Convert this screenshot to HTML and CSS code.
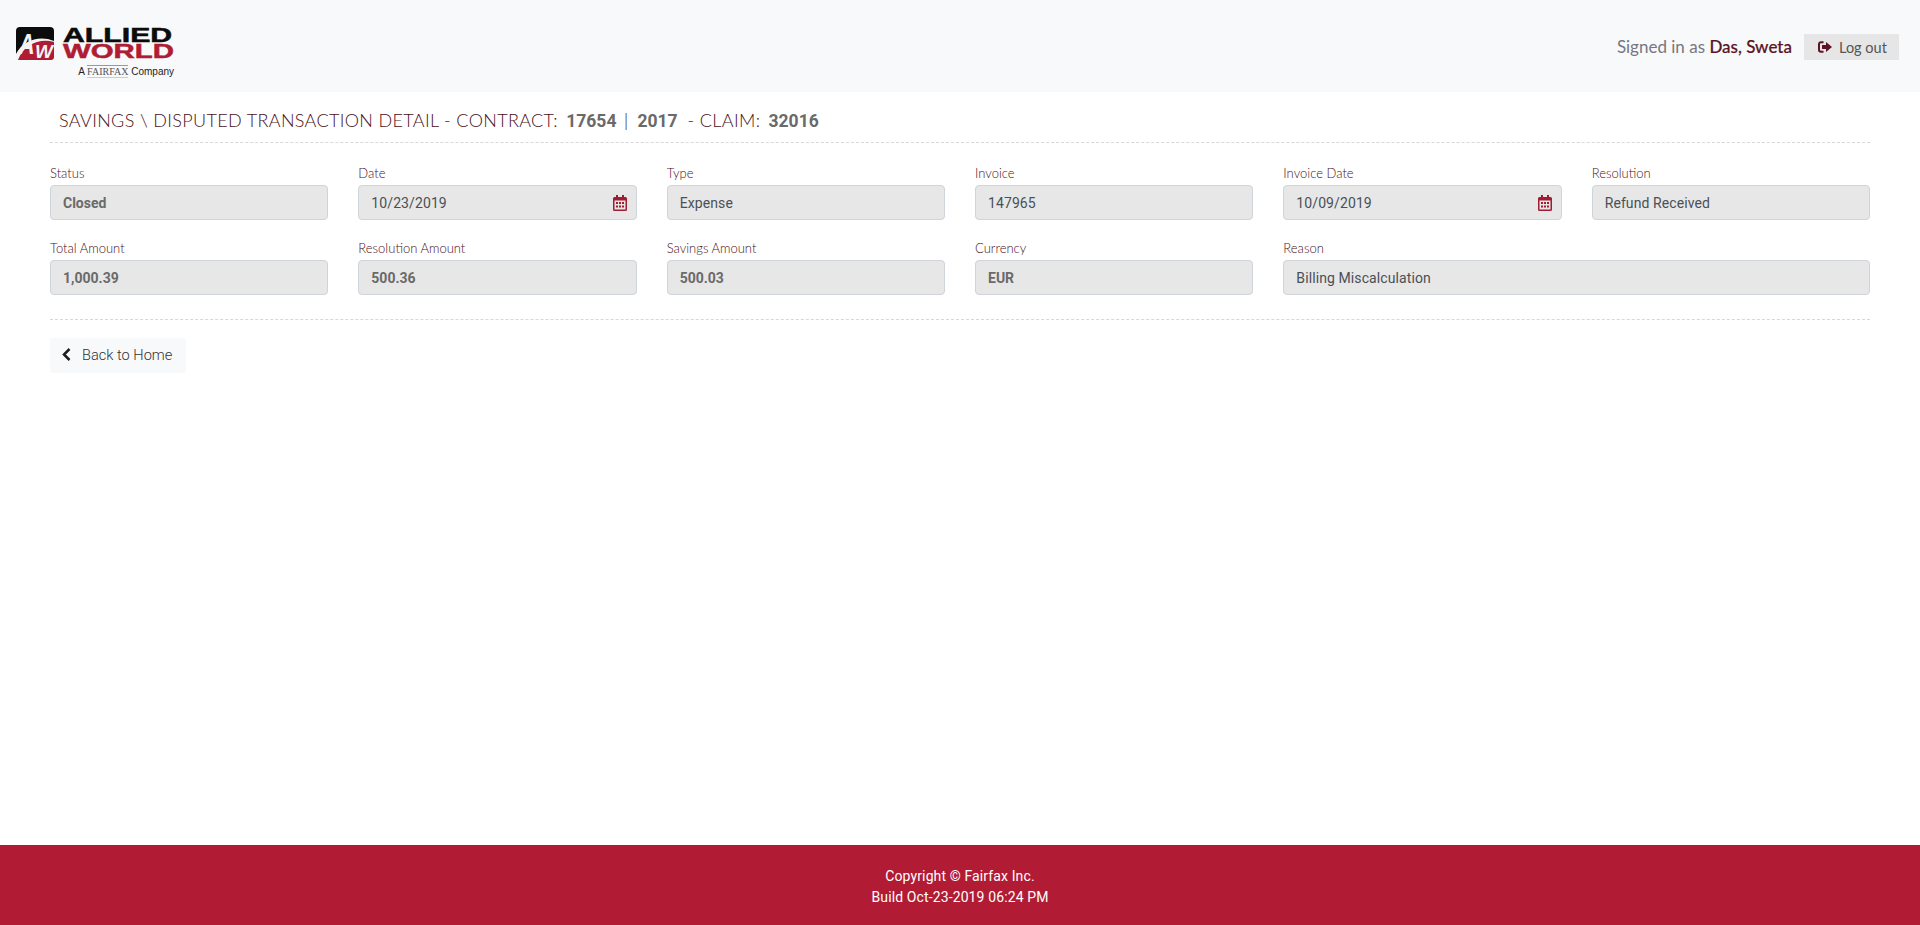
FILE: index.html

```html
<!doctype html>
<html dir="ltr" lang="en">
  <head>
    <meta charset="utf-8">
    <title>Disputed Transaction Detail</title>
    <link rel="stylesheet" href="styles.css">
  </head>
  <body>
    <header class="topbar">
      <div class="logo">
        <div class="logo-main">
          <svg class="logo-icon" width="38" height="36" viewBox="0 0 38 36">
            <rect x="0" y="0" width="38" height="33" rx="4" fill="#0c0c0c"/>
            <path d="M0 33V27C7 15 24 10 38 15V29a4 4 0 0 1-4 4Z" fill="#b01c33"/>
            <path d="M0 27C7 13 24 8 38 14V15C24 11 8 17 2 33H0Z" fill="#f4f4f4"/>
            <text class="logo-a" transform="translate(3 27) scale(.72 1)">A</text>
            <text class="logo-w" x="19" y="31">W</text>
          </svg>
          <div class="logo-words">
            <span class="logo-allied">ALLIED</span>
            <span class="logo-world">WORLD</span>
          </div>
        </div>
        <div class="logo-sub">A <span class="logo-fairfax">FAIRFAX</span> Company</div>
      </div>
      <div class="user">
        <span class="signed">Signed in as <b>Das, Sweta</b></span>
        <a class="logout" href="#">
          <svg width="14" height="12" viewBox="0 0 14 12">
            <path d="M5.5 1.2H3A2 2 0 0 0 1 3.200V8.800A2 2 0 0 0 3 10.800H5.500" fill="none" stroke="#5c1425" stroke-width="2"/>
            <path d="M8 1L14 6L8 11V8H4V4H8Z" fill="#5c1425"/>
          </svg>
          Log out
        </a>
      </div>
    </header>

    <main class="content">
      <h1 class="title">
        SAVINGS \ DISPUTED TRANSACTION DETAIL - CONTRACT: <b>17654</b><i class="sep"></i><b>2017</b><span class="claim">- CLAIM:</span> <b>32016</b>
      </h1>

      <div class="fields">
        <div class="field">
          <label>Status</label>
          <div class="box strong">Closed</div>
        </div>
        <div class="field">
          <label>Date</label>
          <div class="box">10/23/2019
            <svg class="cal" width="14" height="16" viewBox="0 0 14 16">
              <path d="M3 0h2v2h4V0h2v2h1.500A1.500 1.500 0 0 1 14 3.500v11a1.500 1.500 0 0 1-1.500 1.500h-11A1.500 1.500 0 0 1 0 14.500v-11A1.500 1.500 0 0 1 1.500 2H3Z" fill="#a01c33"/>
              <rect x="1.500" y="5.500" width="11" height="9" fill="#e6e6e6"/>
              <path d="M3 7h2v2H3Zm3 0h2v2H6Zm3 0h2v2H9ZM3 10.500h2v2H3Zm3 0h2v2H6Zm3 0h2v2H9Z" fill="#a01c33"/>
            </svg>
          </div>
        </div>
        <div class="field">
          <label>Type</label>
          <div class="box">Expense</div>
        </div>
        <div class="field">
          <label>Invoice</label>
          <div class="box">147965</div>
        </div>
        <div class="field">
          <label>Invoice Date</label>
          <div class="box">10/09/2019
            <svg class="cal" width="14" height="16" viewBox="0 0 14 16">
              <path d="M3 0h2v2h4V0h2v2h1.500A1.500 1.500 0 0 1 14 3.500v11a1.500 1.500 0 0 1-1.500 1.500h-11A1.500 1.500 0 0 1 0 14.500v-11A1.500 1.500 0 0 1 1.500 2H3Z" fill="#a01c33"/>
              <rect x="1.500" y="5.500" width="11" height="9" fill="#e6e6e6"/>
              <path d="M3 7h2v2H3Zm3 0h2v2H6Zm3 0h2v2H9ZM3 10.500h2v2H3Zm3 0h2v2H6Zm3 0h2v2H9Z" fill="#a01c33"/>
            </svg>
          </div>
        </div>
        <div class="field">
          <label>Resolution</label>
          <div class="box">Refund Received</div>
        </div>

        <div class="field">
          <label>Total Amount</label>
          <div class="box strong">1,000.39</div>
        </div>
        <div class="field">
          <label>Resolution Amount</label>
          <div class="box strong">500.36</div>
        </div>
        <div class="field">
          <label>Savings Amount</label>
          <div class="box strong">500.03</div>
        </div>
        <div class="field">
          <label>Currency</label>
          <div class="box strong">EUR</div>
        </div>
        <div class="field wide">
          <label>Reason</label>
          <div class="box">Billing Miscalculation</div>
        </div>
      </div>

      <div class="actions">
        <a class="back" href="#">
          <svg width="9" height="13" viewBox="0 0 9 13">
            <path d="M7.500 1L2 6.500L7.500 12" fill="none" stroke="#1d1d1d" stroke-width="2.500"/>
          </svg>
          Back to Home
        </a>
      </div>
    </main>

    <footer class="footer">
      <div>Copyright © Fairfax Inc.</div>
      <div>Build Oct-23-2019 06:24 PM</div>
    </footer>
  </body>
</html>
```

FILE: styles.css

```css
* {
    box-sizing: border-box;
}
body {
    margin: 0;
    min-height: 100vh;
    display: flex;
    flex-direction: column;
    font-family: Roboto, sans-serif;
    font-size: 14px;
    color: #495057;
    background: #fff;
}

.topbar {
    height: 92px;
    background: #f8f9fa;
    display: flex;
    justify-content: space-between;
    padding: 27px 21px 0 16px;
}
.logo {
    width: 158px;
}
.logo-main {
    display: flex;
    gap: 9px;
}
.logo-icon {
    flex: none;
}
.logo-a {
    font: italic 700 30px "Liberation Sans", sans-serif;
    fill: #f4f4f4;
}
.logo-w {
    font: italic 700 19px "Liberation Sans", sans-serif;
    fill: #f4f4f4;
}
.logo-words {
    display: flex;
    flex-direction: column;
    font-family: "Liberation Sans", sans-serif;
    font-weight: 700;
    font-size: 21px;
    line-height: 16px;
    -webkit-text-stroke: 0.5px;
}
.logo-words span {
    display: block;
    transform-origin: left center;
}
.logo-allied {
    color: #0c0c0c;
    transform: scaleX(1.44);
}
.logo-world {
    color: #b01c33;
    transform: scaleX(1.4);
}
.logo-sub {
    margin-top: 1px;
    text-align: right;
    font-family: "Liberation Sans", sans-serif;
    font-size: 10px;
    line-height: 15px;
    color: #222;
}
.logo-fairfax {
    font-family: "Liberation Serif", serif;
    color: #555;
    border-top: 1px solid #999;
    border-bottom: 1px solid #ccc;
}

.user {
    display: flex;
    align-items: flex-start;
    gap: 12px;
    padding-top: 7px;
}
.signed {
    font-family: Lato, sans-serif;
    font-size: 17px;
    line-height: 26px;
    color: #77777f;
}
.signed b {
    font-weight: 500;
    color: #5c1425;
    -webkit-text-stroke: 0.2px;
}
.logout {
    display: flex;
    align-items: center;
    gap: 7px;
    height: 26px;
    width: 95px;
    padding-left: 14px;
    background: #e6e6e6;
    font-family: Lato, sans-serif;
    font-size: 14.500px;
    color: #555;
    text-decoration: none;
}

.content {
    flex: 1;
    padding: 0 50px;
}
.title {
    margin: 0;
    height: 51px;
    padding: 16px 0 0 9px;
    border-bottom: 1px dashed #d8d8d8;
    font-family: Lato, sans-serif;
    font-weight: 300;
    font-size: 18px;
    line-height: 24px;
    letter-spacing: 0.34px;
    color: #4a1020;
    white-space: nowrap;
}
.title b {
    margin-left: 3px;
    font-family: Roboto, sans-serif;
    font-weight: 700;
    font-size: 17.500px;
    letter-spacing: 0;
    color: #6a6a6a;
}
.sep {
    display: inline-block;
    width: 2px;
    height: 17px;
    margin: 0 7px 0 9px;
    vertical-align: -3px;
    background: #7fa6d8;
    border-left: 1px solid #e3b98c;
}
.claim {
    margin-left: 10px;
}

.fields {
    display: grid;
    grid-template-columns: repeat(6, 1fr);
    column-gap: 30px;
    row-gap: 21px;
    padding-top: 23px;
}
.field label {
    display: block;
    height: 19px;
    font-family: Lato, sans-serif;
    font-weight: 300;
    font-size: 13px;
    line-height: 14px;
    color: #4a1020;
}
.field.wide {
    grid-column: span 2;
}
.box {
    display: flex;
    align-items: center;
    justify-content: space-between;
    height: 35px;
    padding: 0 9px 0 12px;
    background: #e7e7e7;
    border: 1px solid #ced4da;
    border-radius: 4px;
    line-height: 1;
    letter-spacing: 0.1px;
}
.box.strong {
    font-weight: 700;
    letter-spacing: 0;
    color: #6a6a6a;
}

.actions {
    margin-top: 24px;
    padding-top: 18px;
    border-top: 1px dashed #d8d8d8;
}
.back {
    display: inline-flex;
    align-items: center;
    gap: 11px;
    height: 35px;
    width: 136px;
    padding: 0 0 2px 12px;
    background: #f8f9fa;
    border-radius: 3px;
    font-weight: 300;
    font-size: 14.600px;
    color: #333;
    text-decoration: none;
}

.footer {
    height: 80px;
    padding-top: 21px;
    background: #b21b34;
    color: #fff;
    text-align: center;
    font-size: 14px;
    letter-spacing: 0.12px;
    line-height: 21px;
}
```
